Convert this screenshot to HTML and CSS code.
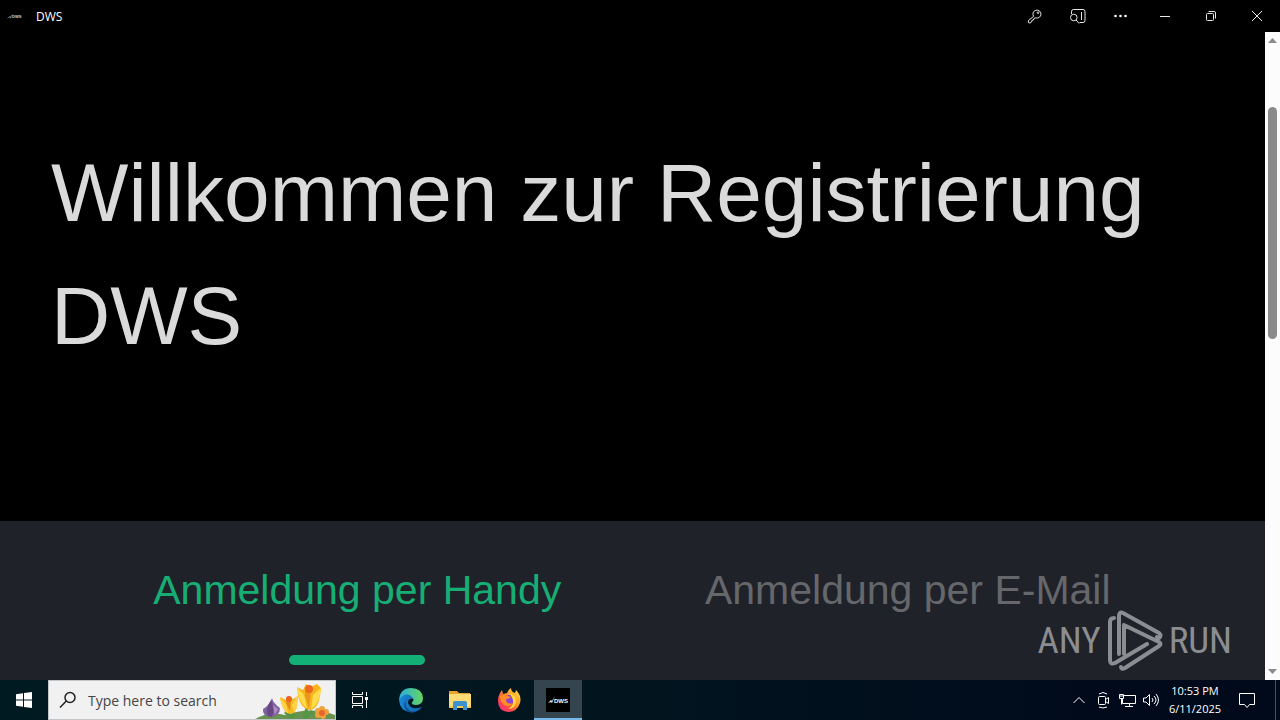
FILE: index.html
```html
<!DOCTYPE html>
<html lang="de">
<head>
<meta charset="utf-8">
<meta name="viewport" content="width=device-width, initial-scale=1">
<title>DWS</title>
<link rel="stylesheet" href="styles.css">
</head>
<body>
<div class="desktop">
  <header class="titlebar">
    <svg class="app-icon" viewBox="0 0 24 24" aria-hidden="true"><path d="M1 16l5-4 1 1 3-5-3 8-1-2z" fill="#bbb"/><text x="9" y="15" class="logo-text">DWS</text></svg>
    <span class="app-name">DWS</span>
    <div class="tools">
      <button class="tool" aria-label="Passwort"><svg width="16" height="16" viewBox="0 0 16 16"><path d="M6.600 8.300A4 4 0 1 1 8.700 9.900L7 10.300 6.500 12 5 12.300 4.500 14 3 15 1.300 14.500 1.500 12.500Z"/><circle cx="11" cy="4.700" r=".8"/></svg></button>
      <button class="tool" aria-label="Auf der Seite suchen"><svg width="16" height="16" viewBox="0 0 16 16"><path d="M1.500 6V3.500q0-2 2-2H13q2 0 2 2v9q0 2-2 2H9.500M11.500 4v8"/><circle cx="3.800" cy="9.500" r="3.300"/><path d="M6.200 12 9 15.500"/></svg></button>
      <button class="tool" aria-label="Mehr"><svg width="16" height="16" viewBox="0 0 16 16"><g class="solid"><circle cx="2.500" cy="8" r="1.300"/><circle cx="7.500" cy="8" r="1.300"/><circle cx="12.500" cy="8" r="1.300"/></g></svg></button>
    </div>
    <button class="window-btn" aria-label="Minimieren"><svg width="10" height="10" viewBox="0 0 10 10"><path d="M0 5.500h10"/></svg></button>
    <button class="window-btn" aria-label="Wiederherstellen"><svg width="10" height="10" viewBox="0 0 10 10"><rect x=".5" y="2.500" width="7" height="7" rx="1"/><path d="M2.500.5H8q1.500 0 1.500 1.500v5.500"/></svg></button>
    <button class="window-btn" aria-label="Schließen"><svg width="10" height="10" viewBox="0 0 10 10"><path d="M0 0l10 10M10 0 0 10"/></svg></button>
  </header>

  <div class="viewport">
    <main class="page">
      <section class="hero"><h1>Willkommen zur Registrierung DWS</h1></section>
      <nav class="tabs">
        <button class="tab active">Anmeldung per Handy</button>
        <button class="tab">Anmeldung per E-Mail</button>
      </nav>
    </main>
    <div class="scrollbar">
      <svg width="9" height="5" viewBox="0 0 9 5"><path d="M0 5 4.500 0 9 5z"/></svg>
      <div class="track"><div class="thumb"></div></div>
      <svg width="9" height="5" viewBox="0 0 9 5"><path d="M0 0 4.500 5 9 0z"/></svg>
    </div>
    <div class="watermark">
      <span>ANY</span>
      <svg width="56" height="62" viewBox="0 0 56 62" aria-hidden="true"><path d="M7 8Q3 8 3 12V50q0 5 5 3L40 34M12 44V6q0-5 4-3L52 23q3 3 0 5l-2-1M17 15 52 32q3 2 0 4L18 58q-4 2-4-1M17 15V44"/></svg>
      <span>RUN</span>
    </div>
  </div>

  <footer class="taskbar">
    <button class="task start" aria-label="Start"><svg width="16" height="16" viewBox="0 0 16 16"><path fill="#fff" d="M0 2.200 7 1.200V7.500H0zM8 1.100 16 0V7.500H8zM0 8.500H7v6.300L0 13.800zM8 8.500h8V16L8 14.900z"/></svg></button>
    <label class="search">
      <svg class="lens" width="18" height="18" viewBox="0 0 18 18"><circle cx="11" cy="6.500" r="5"/><path d="M7.300 10 1 16.500"/></svg>
      <input type="text" placeholder="Type here to search" aria-label="Type here to search">
      <svg class="flowers" width="80" height="38" viewBox="0 0 80 38" aria-hidden="true">
        <path fill="#68924f" d="M0 38Q14 30 30 34 56 25 80 34V38z"/>
        <path fill="none" stroke="#529644" stroke-width="3" d="M36 24 39 36M53 24 49 37M30 31l8 6M57 30l-7 8"/>
        <path fill="#81609f" d="M17 17q1 5 8 10 0 8-9 9-9-1-8-8 7-4 9-11"/><path fill="#674884" d="M16 19q-6 9-3 16l4 1q3-8-1-17"/><path fill="#ae8cc1" d="m18 24 5 4-3 6z"/>
        <path fill="#f6b91f" d="m25 16 6 3 2-4 5 3 5-3-1 9q-1 9-7 9t-9-12z"/><path fill="#ffd347" d="m25 17 6 6 2 9q-6-3-8-15m17-2-5 9 2 8q5-6 3-17"/><path fill="#e38b19" d="m32 16 4 3-1 11-4-8z"/><circle cx="34" cy="18" r="3" fill="#e9641d"/>
        <path fill="#f7b519" d="m42 6 6 3 3-6 5 3 6-3 4 4-1 8q-2 13-10 14-9-1-12-14z"/><path fill="#ffdc4c" d="m42 6 7 8 3 13q-8-4-10-21m24 1-8 7-2 14q9-5 10-21"/><path fill="#e9961c" d="m51 6 5 4-2 17-4-12z"/><circle cx="54" cy="8" r="4" fill="#ed671d"/>
        <g fill="#efa13b"><circle cx="67" cy="28" r="3"/><circle cx="71" cy="31" r="3"/><circle cx="68" cy="35" r="3"/><circle cx="63" cy="34" r="3"/><circle cx="63" cy="30" r="3"/></g><circle cx="67" cy="32" r="3" fill="#e5652d"/>
      </svg>
    </label>
    <button class="task" aria-label="Aufgabenansicht"><svg width="16" height="16" viewBox="0 0 16 16"><path class="line" d="M.5 0v2.500h10V0M.5 16v-2.500h10V16M.5 4.500h10v7H.5zM14.500 0v4M14.500 8v8"/><path fill="#fff" d="M13 5h3v3h-3z"/></svg></button>
    <div class="apps">
      <button class="task" aria-label="Edge"><svg width="26" height="26" viewBox="0 0 26 26"><defs><linearGradient id="edge-top"><stop stop-color="#2aaddf"/><stop offset="1" stop-color="#66d65f"/></linearGradient><linearGradient id="edge-base"><stop stop-color="#1988d6"/><stop offset="1" stop-color="#1262ac"/></linearGradient></defs><path fill="url(#edge-base)" d="M1 13Q3 7 9 7q6 0 6 5-5-1-5 4 3 8 14 4-4 6-12 5Q2 24 1 13"/><path fill="#124d8e" d="M9 11q-3 5 0 10 4 5 10 3-5 3-10 0-6-6 0-13z"/><path fill="url(#edge-top)" d="M1 13Q2 1 13 1q11 0 12 10 0 7-7 7-5 0-4-3 3-2 0-5Q8 4 1 13"/></svg></button>
      <button class="task" aria-label="Explorer"><svg width="22" height="20" viewBox="0 0 22 20"><path fill="#e9a22d" d="M0 1h8l2 2h11v4H0z"/><path fill="#ffdb76" d="M0 4h22v14H0z"/><path fill="#f7c858" d="M0 16h22v2H0z"/><path fill="#3c91ce" d="M4 13q0-2 2-2h10q2 0 2 2v7h-4v-4H8v4H4z"/></svg></button>
      <button class="task" aria-label="Firefox"><svg width="24" height="24" viewBox="0 0 24 24"><defs><linearGradient id="fox" x1="1" y1="0" x2="0" y2="1"><stop stop-color="#ffed43"/><stop offset=".4" stop-color="#ff9b28"/><stop offset=".7" stop-color="#ff4350"/><stop offset="1" stop-color="#e42e8b"/></linearGradient></defs><path fill="url(#fox)" d="M3 5 5 2l1 4 4-1q1-3 4-5 0 4 4 5l1-3q6 6 4 13-3 9-12 9Q1 23 1 13q0-5 2-8"/><circle cx="12" cy="12" r="5" fill="#8b44d6"/><path fill="#ff8d24" d="M3 8q5-3 8 0l3 1q-2 2-5 2 0 6 7 4-4 5-9 2-4-3-4-9"/><path fill="#ffd53b" d="M12 5q8 2 7 10-2 6-8 6 6-3 5-9-1-4-4-7"/></svg></button>
      <button class="task open" aria-label="DWS"><svg width="24" height="24" viewBox="0 0 24 24"><path fill="#000" d="M0 0h24v24H0z"/><path d="M2 15l3-3 1 1 3-5-3 7-1-1z" fill="#eee"/><text x="8" y="15" class="logo-text">DWS</text></svg></button>
    </div>
    <div class="tray">
      <button aria-label="Ausgeblendete Symbole"><svg width="12" height="8" viewBox="0 0 12 8"><path d="M.5 7 6 1.500 11.500 7"/></svg></button>
      <button aria-label="Kamera"><svg width="14" height="18" viewBox="0 0 14 18"><rect x="2.500" y="5.500" width="7" height="8" rx="1"/><path d="m9.500 8.500 3-2v6l-3-2M3 3q4-3 8 0M3 16q4 2 8 0"/></svg></button>
      <button aria-label="Netzwerk"><svg width="17" height="15" viewBox="0 0 17 15"><path d="M5 2.500h11.500v8H3.500V6M10.500 10.500v3M6 13.500h8M.5 1.500h4v4h-4zM2.500 5.500v6M1 3h3"/></svg></button>
      <button aria-label="Lautstärke"><svg width="17" height="14" viewBox="0 0 17 14"><path d="M.5 5h2.500L6.500 1.500v11L3 9H.5zM9 5q2 2 0 4M11 3q4 4 0 8M13 1q5 6 0 12"/></svg></button>
    </div>
    <div class="clock"><time>10:53 PM</time><time>6/11/2025</time></div>
    <button class="notices" aria-label="Benachrichtigungen"><svg width="17" height="17" viewBox="0 0 17 17"><path d="M.5 1.500h15v11h-5l-2.500 3-2.500-3h-5z"/></svg></button>
    <button class="peek" aria-label="Desktop anzeigen"></button>
  </footer>
</div>
</body>
</html>
```

FILE: styles.css
```css
* { box-sizing: border-box; }
body { margin: 0; background: #000; color: #fff; font-family: "Open Sans", "Noto Sans", sans-serif; }
button { padding: 0; border: 0; background: none; color: inherit; font: inherit; }
svg { display: block; flex: none; }
.desktop { display: grid; grid-template-rows: 32px minmax(0, 1fr) 40px; height: 100vh; }

.titlebar { display: flex; align-items: center; font-size: 12px; }
.app-icon { width: 16px; height: 16px; margin: 0 14px 0 6px; opacity: .8; }
.logo-text { font: bold 6px "Liberation Sans", sans-serif; fill: #fff; }
.tools { display: flex; margin-left: auto; }
.tool, .window-btn { display: grid; place-items: center; height: 32px; }
.tool { width: 43px; }
.window-btn { width: 46px; }
.titlebar button svg { fill: none; stroke: #e8e8e8; overflow: visible; }
.titlebar .solid { fill: #fff; stroke: none; }

.viewport { position: relative; display: flex; }
.page { flex: 1; min-width: 0; display: flex; flex-direction: column; overflow: hidden; font-family: "Liberation Sans", Arial, sans-serif; }
.hero { padding: 99px 51px 144px; }
h1 { margin: 0; font-size: 82px; font-weight: 400; line-height: 123px; color: #dadada; }
.tabs { flex: 1; display: grid; grid-template-columns: 1fr 1fr; align-items: start; padding: 39px 82px 0; background: #1f2229; }
.tab { display: flex; flex-direction: column; align-items: center; gap: 34px; font-size: 41px; line-height: 61px; color: #65676b; white-space: nowrap; }
.tab.active { color: #17ae75; }
.tab.active::after { content: ""; width: 136px; height: 10px; border-radius: 5px; background: #13b176; }

.scrollbar { display: flex; flex-direction: column; align-items: center; width: 15px; padding: 6px 0; background: #fcfcfc; }
.scrollbar svg { fill: #8b8b8b; }
.track { flex: 1; width: 9px; padding-top: 64px; }
.thumb { height: 232px; border-radius: 5px; background: #8b8b8b; }

.watermark { position: absolute; right: 48px; bottom: 8px; display: flex; align-items: center; gap: 6px; color: #8b8d91; font: 400 37px/62px "Roboto Condensed", "Liberation Sans Narrow", sans-serif; }
.watermark svg { fill: none; stroke: #8b8d91; stroke-width: 4; stroke-linejoin: round; stroke-linecap: round; }

.taskbar { display: flex; background: linear-gradient(90deg, #001a22, #02151f 50%, #000a1b 85%); }
.task { display: grid; place-items: center; width: 48px; }
.line { fill: none; stroke: #fff; }
.search { display: flex; align-items: center; width: 288px; border: 1px solid #c2c6c8; background: #f1f1f1; }
.lens { margin: 0 11px 0 10px; fill: none; stroke: #222; stroke-width: 1.5px; }
.search input { flex: 1; min-width: 0; padding: 0; border: 0; background: none; font: 14px "Open Sans", "Noto Sans", sans-serif; }
.search input::placeholder { color: #454545; opacity: 1; }
.apps { display: flex; gap: 1px; margin-left: 3px; }
.open { background: #34454f; box-shadow: inset 0 -2px #76b9ed; }
.tray { display: flex; margin-left: auto; }
.tray button { display: grid; place-items: center; width: 24px; }
.tray svg, .notices svg { fill: none; stroke: #fff; }
.clock { display: flex; flex-direction: column; align-items: center; justify-content: center; width: 64px; font-size: 11px; line-height: 18px; }
.notices { display: grid; place-items: center; width: 40px; }
.peek { width: 5px; margin-left: 8px; border-left: 1px solid #49505c; }
```
